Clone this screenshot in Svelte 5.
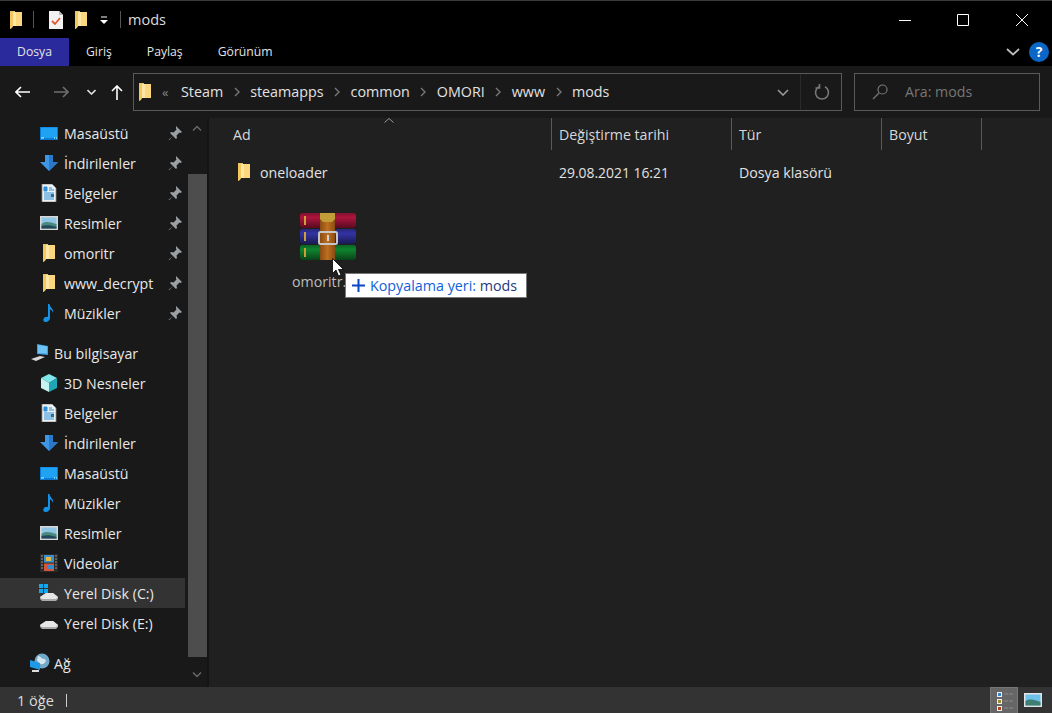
<script>
  const quick = [
    ['desktop', 'Masaüstü'], ['down', 'İndirilenler'], ['doc', 'Belgeler'], ['pic', 'Resimler'],
    ['folder', 'omoritr'], ['folder', 'www_decrypt'], ['music', 'Müzikler']
  ];
  const pc = [
    ['cube', '3D Nesneler'], ['doc', 'Belgeler'], ['down', 'İndirilenler'], ['desktop', 'Masaüstü'],
    ['music', 'Müzikler'], ['pic', 'Resimler'], ['film', 'Videolar']
  ];
  const crumbs = ['Steam', 'steamapps', 'common', 'OMORI', 'www', 'mods'];
  const tabs = ['Giriş', 'Paylaş', 'Görünüm'];
  const cols = [['Değiştirme tarihi', 'c2'], ['Tür', 'c3'], ['Boyut', 'c4']];
</script>

{#snippet folder(cls)}
  <svg class={cls} viewBox="0 0 12 18" width="12" height="18">
    <path d="M3 1h9v14H3z" fill="#fcd77e"/>
    <path d="M0 0h5v2l-2 0v13l-1 2-2 1z" fill="#e8c26a"/>
    <path d="M3 1h3v14H3z" fill="#fde7a7"/>
    <path d="M0 1h3v14l-3 3z" fill="#f3c95f"/>
  </svg>
{/snippet}

{#snippet icon(name)}
  {#if name === 'desktop'}
    <svg class="ico" viewBox="0 0 18 14" width="18" height="14"><path d="M0 1h18v13H0z" fill="#0a7ad6"/><path d="M1 1.500h16v10.500H1z" fill="#1fa2f2"/><path d="M1 12h3M14 12h1M16 12h1" stroke="#cfe" stroke-width="1"/></svg>
  {:else if name === 'down'}
    <svg class="ico" viewBox="0 0 18 16" width="18" height="16"><path d="M5 0h8v7h5l-9 9-9-9h5z" fill="#3f95e6"/><path d="M9 0h4v7h5l-9 9z" fill="#2a78c9"/></svg>
  {:else if name === 'doc'}
    <svg class="ico" viewBox="0 0 18 18" width="18" height="18"><path d="M2 0h10l4 4v14H2z" fill="#eef1f3" stroke="#8a8a8a" stroke-width=".8"/><path d="M4 3h3v4H4zM4 9h10M4 11h7M4 13h10M4 15h10M9 4h3M9 6h5" stroke="#2a8fd8" stroke-width="1" fill="#2a8fd8"/><path d="M11 10h3v3h-3z" fill="#2b6f90"/></svg>
  {:else if name === 'pic'}
    <svg class="ico" viewBox="0 0 18 14" width="18" height="14"><path d="M0 0h18v14H0z" fill="#d8d8d8"/><path d="M1.500 1.500h15v11h-15z" fill="#8fc6e6"/><path d="M1.500 8c4-3 8-2 15 0v4.500h-15z" fill="#4a8a7e"/><path d="M1.500 10c5-1 9-1 15 1v1.500h-15z" fill="#26485a"/></svg>
  {:else if name === 'folder'}
    {@render folder('ico')}
  {:else if name === 'music'}
    <svg class="ico" viewBox="0 0 18 18" width="18" height="18"><path d="M8 0h1.500c.5 4 4.500 4.500 3.500 9-.5-2-2-3.500-3-3.500V14c0 2.500-2.500 4-4.500 4S3 16.500 3.500 15s2.500-2.500 4.500-2z" fill="#1592e6"/></svg>
  {:else if name === 'cube'}
    <svg class="ico" viewBox="0 0 18 18" width="18" height="18"><path d="M9 0l8 4-8 5-8-5z" fill="#7fe6ea"/><path d="M1 4l8 5v9l-8-4z" fill="#c4f3f2"/><path d="M17 4l-8 5v9l8-4z" fill="#1ea6b8"/></svg>
  {:else if name === 'film'}
    <svg class="ico" viewBox="0 0 18 18" width="18" height="18"><path d="M0 0h18v18H0z" fill="#2b2b2b"/><path d="M4 1h10v7.500H4z" fill="#3b8fd0"/><path d="M4 9.500h10V17H4z" fill="#d4563a"/><path d="M6 3h5v4H6z" fill="#e6b93c"/><path d="M8 11h5v4H8z" fill="#3a8ad0"/><path d="M1 2h2M1 5h2M1 8h2M1 11h2M1 14h2M15 2h2M15 5h2M15 8h2M15 11h2M15 14h2" stroke="#999" stroke-width="1"/></svg>
  {:else if name === 'diskc'}
    <svg class="ico disk" viewBox="0 0 20 18" width="20" height="18"><path d="M1 0h4v4H1zM6 0h4v4H6zM1 5h4v4H1zM6 5h4v4H6z" fill="#12a8ee"/><path d="M2 13l6-4h7l5 4v2l-2 2H4l-2-2z" fill="#a9a9a9"/><path d="M2 13l6-4h7l5 4-2 2H4z" fill="#e6e6e6"/></svg>
  {:else if name === 'diske'}
    <svg class="ico disk" viewBox="0 0 20 18" width="20" height="18"><path d="M2 11l6-4h7l5 4v2l-2 2H4l-2-2z" fill="#a9a9a9"/><path d="M2 11l6-4h7l5 4-2 2H4z" fill="#e6e6e6"/></svg>
  {/if}
{/snippet}

{#snippet pin()}
  <svg class="pin" viewBox="0 0 14 14" width="14" height="14"><path d="M8 0l6 6-1.500 1-1-.5-3 3 .5 2.500-1 1-3-3-4 4.500-.5-.5 4.500-4-3-3 1-1 2.500.5 3-3-.5-1z" fill="#9aa0a4"/></svg>
{/snippet}

{#snippet navrow(item)}
  <div class="row">
    {@render icon(item[0])}
    <span class="label">{item[1]}</span>
    {@render pin()}
  </div>
{/snippet}

<div class="win">
  <div class="title">
    <div class="qa">
      {@render folder('f1')}
      <i class="vsep s1"></i>
      <svg class="chk" viewBox="0 0 14 18" width="14" height="18"><path d="M0 0h10l4 4v14H0z" fill="#f2f2f2"/><path d="M10 0l4 4h-4z" fill="#bbb"/><path d="M3 10l3 3 5-6" stroke="#e2572b" stroke-width="1.800" fill="none"/></svg>
      {@render folder('f2')}
      <svg class="more" viewBox="0 0 8 8" width="8" height="8"><path d="M1 1h6" stroke="#fff"/><path d="M0 4h8L4 8z" fill="#fff"/></svg>
      <i class="vsep s2"></i>
      <span class="wintitle">mods</span>
    </div>
    <div class="ctrls">
      <svg viewBox="0 0 12 12" width="12" height="12"><path d="M0 6.500h12" stroke="#fff"/></svg>
      <svg viewBox="0 0 12 12" width="12" height="12"><path d="M.5.500h11v11H.5z" stroke="#fff" fill="none"/></svg>
      <svg viewBox="0 0 12 12" width="12" height="12"><path d="M0 0l12 12M12 0L0 12" stroke="#fff"/></svg>
    </div>
  </div>

  <div class="tabs">
    <div class="tab active">Dosya</div>
    {#each tabs as t}<div class="tab">{t}</div>{/each}
    <div class="rib">
      <svg viewBox="0 0 14 8" width="14" height="8"><path d="M1 1l6 5.500L13 1" stroke="#bbb" stroke-width="1.800" fill="none"/></svg>
      <span class="help">?</span>
    </div>
  </div>

  <div class="nav">
    <div class="arrows">
      <svg class="back" viewBox="0 0 15 12" width="15" height="12"><path d="M15 6H1M6 1L1 6l5 5" stroke="#fff" stroke-width="1.600" fill="none"/></svg>
      <svg class="fwd" viewBox="0 0 15 12" width="15" height="12"><path d="M0 6h14M9 1l5 5-5 5" stroke="#6e6e6e" stroke-width="1.600" fill="none"/></svg>
      <svg class="hist" viewBox="0 0 9 6" width="9" height="6"><path d="M.5 1l4 4 4-4" stroke="#ddd" stroke-width="1.600" fill="none"/></svg>
      <svg class="upa" viewBox="0 0 12 15" width="12" height="15"><path d="M6 15V1M1 6l5-5 5 5" stroke="#fff" stroke-width="1.600" fill="none"/></svg>
    </div>
    <div class="addr">
      {@render folder('f3')}
      <span class="dbl">«</span>
      <div class="crumbs">
        {#each crumbs as c, i}
          {#if i > 0}<svg class="sep" viewBox="0 0 6 10" width="6" height="10"><path d="M1 1l4 4-4 4" stroke="#777" stroke-width="1.400" fill="none"/></svg>{/if}
          <span>{c}</span>
        {/each}
      </div>
      <svg class="dd" viewBox="0 0 12 7" width="12" height="7"><path d="M1 1l5 5 5-5" stroke="#999" stroke-width="1.600" fill="none"/></svg>
      <i class="addsep"></i>
      <svg class="refresh" viewBox="0 0 16 16" width="16" height="16"><path d="M5 2.800a6.500 6.500 0 1 0 6 0M5.500 0v4H1.500" stroke="#777" stroke-width="1.600" fill="none"/></svg>
    </div>
    <div class="search">
      <svg viewBox="0 0 16 16" width="16" height="16"><circle cx="10.500" cy="5.500" r="4.500" stroke="#777" fill="none" stroke-width="1.200"/><path d="M7 9l-6 6" stroke="#777" stroke-width="1.300"/></svg>
      <span>Ara: mods</span>
    </div>
  </div>

  <div class="body">
    <aside class="side">
      <div class="tree">
        <div class="group">
          {#each quick as q}{@render navrow(q)}{/each}
        </div>
        <div class="group">
          <div class="row top">
            <svg class="ico" viewBox="0 0 20 18" width="20" height="18"><path d="M7 0l11 2v9L7 10z" fill="#3b9fe0"/><path d="M8 1l9 1.500v7L8 9z" fill="#6ec3f5"/><path d="M1 15l9-3 5 1-9 4z" fill="#d8d8d8"/></svg>
            <span class="label">Bu bilgisayar</span>
          </div>
          {#each pc as p}
            <div class="row">{@render icon(p[0])}<span class="label">{p[1]}</span></div>
          {/each}
          <div class="row sel">{@render icon('diskc')}<span class="label">Yerel Disk (C:)</span></div>
          <div class="row">{@render icon('diske')}<span class="label">Yerel Disk (E:)</span></div>
        </div>
        <div class="group">
          <div class="row top">
            <svg class="ico" viewBox="0 0 20 20" width="20" height="20"><circle cx="12" cy="8" r="7.500" fill="#6fa8c8"/><path d="M8 3c3 0 3 3 6 3s2 4-1 5-5-2-6-4z" fill="#d6e6ee"/><path d="M0 7l10 3v7L0 14z" fill="#1f9ae6"/><path d="M2 17h7v2H2z" fill="#ddd"/></svg>
            <span class="label">Ağ</span>
          </div>
        </div>
      </div>
      <div class="sbar">
        <svg class="cv" viewBox="0 0 10 6" width="10" height="6"><path d="M1 5.500l4-4 4 4" stroke="#6a6a6a" stroke-width="1.400" fill="none"/></svg>
        <div class="gap1"></div>
        <div class="thumb"></div>
        <div class="gap2"></div>
        <svg class="cv" viewBox="0 0 10 6" width="10" height="6"><path d="M1 .500l4 4 4-4" stroke="#6a6a6a" stroke-width="1.400" fill="none"/></svg>
      </div>
    </aside>

    <main class="files">
      <div class="head">
        <div class="hc c1">Ad
          <svg class="sort" viewBox="0 0 10 5" width="10" height="5"><path d="M.5 4.500L5 .500l4.500 4" stroke="#999" fill="none"/></svg>
        </div>
        {#each cols as c}<div class="hc {c[1]}">{c[0]}</div>{/each}
      </div>
      <div class="file">
        <div class="fc c1 name">{@render folder('f4')}<span>oneloader</span></div>
        <div class="fc c2">29.08.2021 16:21</div>
        <div class="fc c3">Dosya klasörü</div>
      </div>
    </main>
  </div>

  <div class="status">
    <span>1 öğe</span>
    <i class="stsep"></i>
    <div class="views">
      <div class="vb on">
        <svg viewBox="0 0 20 22" width="20" height="22"><path d="M3 2h5v5H3zM3 9h5v5H3zM3 16h5v5H3z" fill="#eee"/><path d="M4 3h3v3H4z" fill="#3a86c8"/><path d="M4 10h3v3H4z" fill="#9a8a30"/><path d="M4 17h3v3H4z" fill="#b04020"/><path d="M10 4h4M15 4h4M10 11h4M15 11h4M10 18h4M15 18h4" stroke="#8a8a8a" stroke-width="1.200"/></svg>
      </div>
      <svg class="big" viewBox="0 0 18 14" width="18" height="14"><path d="M0 0h18v14H0z" fill="#e4e4e4"/><path d="M1.500 1.500h15v11h-15z" fill="#6cc0ea"/><path d="M1.500 8c5-3 9-1 15 1v3.500h-15z" fill="#3f7f72"/></svg>
    </div>
  </div>

  <div class="ghost">
    <svg viewBox="0 0 56 48" width="56" height="48">
      <defs>
        <linearGradient id="sh" x1="0" y1="0" x2="0" y2="1"><stop offset="0" stop-color="#000" stop-opacity=".25"/><stop offset=".3" stop-color="#000" stop-opacity="0"/><stop offset="1" stop-color="#000" stop-opacity=".5"/></linearGradient>
        <linearGradient id="belt" x1="0" y1="0" x2="1" y2="0"><stop offset="0" stop-color="#8f4e14"/><stop offset=".5" stop-color="#c8741f"/><stop offset="1" stop-color="#8f4e14"/></linearGradient>
      </defs>
      <rect x="0" y="0" width="56" height="15" rx="2" fill="#b5153f"/>
      <rect x="0" y="16" width="56" height="15" rx="2" fill="#3434aa"/>
      <rect x="0" y="32" width="56" height="15" rx="2" fill="#0f8a30"/>
      <rect x="0" y="0" width="56" height="15" fill="url(#sh)"/>
      <rect x="0" y="16" width="56" height="15" fill="url(#sh)"/>
      <rect x="0" y="32" width="56" height="15" fill="url(#sh)"/>
      <path d="M4 3h2v9H4zM4 19h2v9H4zM4 35h2v9H4z" fill="#d9a53a"/>
      <path d="M20 0h15v47H20z" fill="url(#belt)"/>
      <path d="M20 0h15v6l-3 3H23l-3-3z" fill="#c9a43a"/>
      <rect x="19" y="19" width="18" height="12" rx="1.500" fill="none" stroke="#cfcfcf" stroke-width="2"/>
      <path d="M27 22h2v6h-2z" fill="#ddd"/>
    </svg>
  </div>
  <div class="gname">omoritr.</div>
  <div class="tip">
    <svg viewBox="0 0 13 13" width="13" height="13"><path d="M6.500 0v13M0 6.500h13" stroke="#0b46c4" stroke-width="2"/></svg>
    <span class="tb">Kopyalama yeri:</span>&nbsp;<span class="td">mods</span>
  </div>
  <svg class="cursor" viewBox="0 0 12 19" width="12" height="19"><path d="M.5.500v15l3.500-3.500 2.500 6 2.500-1-2.500-5.500h5z" fill="#fff" stroke="#000" stroke-width=".8"/></svg>
</div>

<style>
  :global(body) { margin: 0; background: #000; }
  .win {
    position: relative; width: 1052px; height: 713px; overflow: hidden; display: flex; flex-direction: column;
    font-family: "Open Sans", "Noto Sans", sans-serif; font-size: 14.200px; color: #e6e6e6; background: #000;
  }
  svg { display: block; flex: none; }

  .title { height: 37px; border-top: 1px solid #3a3a3a; display: flex; justify-content: space-between; align-items: center; background: #000; }
  .qa { display: flex; align-items: center; padding-left: 10px; }
  .s1, .s2, .vsep { display: block; width: 1px; height: 17px; background: #555; }
  .s1 { margin-left: 11px; margin-right: 15px; }
  .f2 { margin-left: 12px; }
  .more { margin-left: 13px; margin-right: 12px; }
  .s2 { margin-right: 7px; }
  .wintitle { font-size: 14.500px; color: #ddd; }
  .ctrls { display: flex; gap: 46px; padding-right: 24px; }
  .ctrls svg:nth-child(2) { margin-right: 1px; }

  .tabs { height: 28px; display: flex; align-items: center; background: #000; font-size: 12.200px; position: relative; }
  .tab { color: #e4e4e4; height: 28px; line-height: 28px; margin-right: 35px; }
  .tab.active { width: 69px; background: #2a2a9c; text-align: center; margin-right: 17px; }
  .rib { margin-left: auto; display: flex; align-items: center; gap: 9px; padding-right: 3px; }
  .help { width: 20px; height: 20px; border-radius: 50%; background: #0a67c6; color: #fff; font: bold 14px/20px "Open Sans", sans-serif; text-align: center; }

  .nav { height: 52px; background: #191919; display: flex; align-items: center; padding-left: 15px; box-sizing: border-box; }
  .arrows { display: flex; align-items: center; width: 118px; }
  .fwd { margin-left: 24px; }
  .hist { margin-left: 18px; }
  .upa { margin-left: 15px; }
  .addr { width: 709px; height: 38px; box-sizing: border-box; border: 1px solid #5a5a5a; display: flex; align-items: center; padding-left: 5px; }
  .dbl { margin-left: 11px; width: 19px; color: #888; font-size: 13px; }
  .crumbs { display: flex; align-items: center; gap: 10.500px; flex: 1; color: #e2e2e2; font-size: 14.300px; padding-bottom: 2px; }
  .crumbs .sep { margin-top: 2px; }
  .dd { margin-right: 11px; }
  .addsep { width: 1px; height: 36px; background: #2a2a2a; margin-right: 13px; }
  .refresh { margin-right: 11px; }
  .search { width: 186px; height: 38px; margin-left: 12px; box-sizing: border-box; border: 1px solid #5a5a5a; display: flex; align-items: center; padding-left: 17px; gap: 17px; color: #777; }
  .search span { margin-top: -2px; }

  .body { flex: 1; display: flex; min-height: 0; }
  .side { width: 209px; background: #191919; display: flex; box-sizing: border-box; border-right: 2px solid #141414; }
  .tree { width: 187px; display: flex; flex-direction: column; gap: 10px; }
  .row { height: 30px; display: flex; align-items: center; position: relative; padding-left: 40px; white-space: nowrap; }
  .row.top { padding-left: 30px; }
  .row.sel { background: #333; width: 185px; box-sizing: border-box; }
  .ico { width: 18px; }
  .row.top .ico { width: 20px; margin-right: 4px; }
  .disk { width: 20px; margin-left: -2px; }
  .label { margin-left: 6px; color: #e8e8e8; }
  .row.top .label { margin-left: 0; }
  .pin { position: absolute; left: 168px; top: 8px; }
  .sbar { width: 20px; display: flex; flex-direction: column; align-items: center; }
  .sbar .cv { margin-top: 7px; }
  .gap1 { height: 43px; }
  .thumb { height: 483px; width: 19px; background: #4d4d4d; }
  .gap2 { height: 8px; }

  .files { flex: 1; background: #202020; }
  .head { height: 32px; display: flex; }
  .hc { box-sizing: border-box; height: 32px; line-height: 33px; padding-left: 7px; color: #d8d8d8; position: relative; border-right: 1px solid #5a5a5a; }
  .c1 { width: 343px; padding-left: 24px; }
  .c2 { width: 180px; }
  .c3 { width: 150px; }
  .c4 { width: 100px; }
  .sort { position: absolute; left: 175px; top: 0; }
  .file { display: flex; height: 44px; align-items: center; }
  .fc { box-sizing: border-box; padding-left: 8px; color: #e2e2e2; }
  .name { display: flex; align-items: center; padding-left: 29px; gap: 10px; }
  .c1.name { width: 342px; }
  .fc.c2 { width: 180px; font-size: 13.900px; }

  .status { height: 26px; background: #333; display: flex; align-items: center; padding-left: 17px; font-size: 14.500px; color: #dcdcdc; }
  .status span { padding-top: 1px; }
  .stsep { width: 1px; height: 13px; background: #ccc; margin-left: 12px; }
  .views { margin-left: auto; display: flex; align-items: center; gap: 6px; padding-right: 10px; height: 26px; }
  .vb.on { width: 28px; height: 26px; box-sizing: border-box; background: #666; border: 1px solid #777; border-bottom: 0; display: flex; align-items: center; justify-content: center; }

  .ghost { position: absolute; left: 300px; top: 213px; opacity: .95; }
  .gname { position: absolute; left: 292px; top: 272px; color: #bdbdbd; }
  .tip { position: absolute; left: 345px; top: 273px; width: 182px; height: 25px; box-sizing: border-box; background: #fff; border: 1px solid #777; display: flex; align-items: center; padding-left: 6px; white-space: nowrap; font-size: 14.300px; }
  .tb { color: #0f5fd8; margin-left: 5px; }
  .td { color: #1a3a80; }
  .cursor { position: absolute; left: 332px; top: 258px; }
</style>
